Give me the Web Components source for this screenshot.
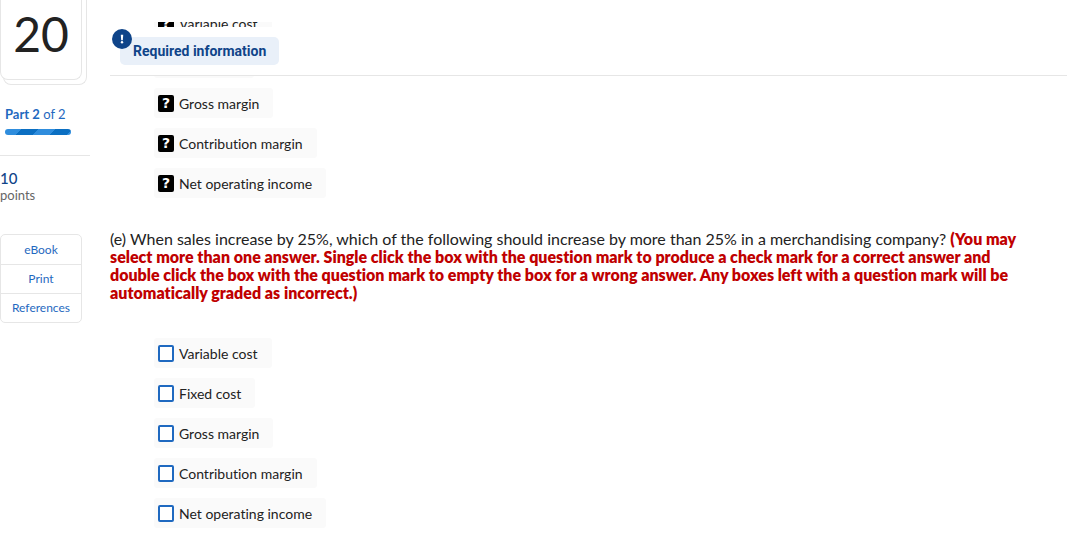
<!DOCTYPE html>
<html lang="en">
<head>
<meta charset="utf-8">
<meta name="viewport" content="width=device-width, initial-scale=1">
<title>Question 20</title>
<style>
  body {
    margin: 0;
    background: #fff;
    color: #222;
    font-family: Lato, "Open Sans", sans-serif;
    font-variant-ligatures: none;
  }
</style>
</head>
<body>
<question-page></question-page>

<script>
class QuestionNumber extends HTMLElement {
  constructor () {
    super()
    this.attachShadow({ mode: 'open' })
  }

  connectedCallback () {
    this.shadowRoot.innerHTML = `
    <style>
    :host {
      display: block;
      box-sizing: border-box;
      width: 87px;
      height: 85px;
      padding-right: 5px;
      padding-bottom: 5px;
      position: relative;
    }
    .back, .card {
      box-sizing: border-box;
      border: 1px solid #e6e6e6;
      border-top: 0;
      border-radius: 0 0 8px 8px;
      background: #fff;
    }
    .back {
      position: absolute;
      inset: 0 0 0 3px;
    }
    .card {
      position: relative;
      height: 80px;
      padding-top: 4px;
      text-align: center;
      font-size: 48px;
      line-height: 60px;
    }
    </style>
    <div class="back"></div>
    <div class="card"><slot></slot></div>
    `
  }
}
customElements.define('question-number', QuestionNumber)

class PartProgress extends HTMLElement {
  constructor () {
    super()
    this.attachShadow({ mode: 'open' })
  }

  connectedCallback () {
    this.shadowRoot.innerHTML = `
    <style>
    :host {
      display: block;
      padding: 0 19px 20px 5px;
      border-bottom: 1px solid #e6e6e6;
      color: #1f69c0;
      font-size: 13px;
      line-height: 18px;
    }
    .bar {
      height: 6px;
      margin-top: 6px;
      border-radius: 3px;
      background: repeating-linear-gradient(135deg, #2f8ddd 0 12px, #0b6fc2 12px 24px);
    }
    </style>
    <div><slot></slot></div>
    <div class="bar"></div>
    `
  }
}
customElements.define('part-progress', PartProgress)

class ResourceLinks extends HTMLElement {
  constructor () {
    super()
    this.attachShadow({ mode: 'open' })
  }

  connectedCallback () {
    this.shadowRoot.innerHTML = `
    <style>
    :host {
      display: flex;
      flex-direction: column;
      box-sizing: border-box;
      width: 82px;
      padding-top: 1px;
      border: 1px solid #e6e6e6;
      border-radius: 5px;
    }
    ::slotted(a) {
      color: #1f69c0;
      font-size: 12px;
      line-height: 28px;
      text-align: center;
      text-decoration: none;
    }
    ::slotted(a:not(:last-child)) {
      border-bottom: 1px solid #e6e6e6;
    }
    </style>
    <slot></slot>
    `
  }
}
customElements.define('resource-links', ResourceLinks)

class RequiredInfo extends HTMLElement {
  constructor () {
    super()
    this.attachShadow({ mode: 'open' })
  }

  connectedCallback () {
    this.shadowRoot.innerHTML = `
    <style>
    :host {
      display: block;
      position: absolute;
      top: 0;
      left: 0;
      right: 0;
    }
    .cover {
      height: 22px;
      background: #fff;
    }
    .header {
      box-sizing: border-box;
      height: 49px;
      margin-top: 5px;
      padding: 10px 10px;
      border-bottom: 1px solid #e6e6e6;
      background: #fff;
    }
    .label {
      display: inline-block;
      position: relative;
      padding: 0 13px;
      border-radius: 5px;
      background: #e9f0f9;
      color: #0f4489;
      font: 700 14px/28px Roboto, sans-serif;
    }
    .badge {
      position: absolute;
      top: -8px;
      left: -8px;
      width: 20px;
      height: 20px;
    }
    </style>
    <div class="cover"></div>
    <div class="header">
      <div class="label">
        <svg class="badge" viewBox="0 0 20 20" aria-hidden="true">
          <circle cx="10" cy="10" r="10" fill="#0f4489"/>
          <path d="M8.8 5.8h2.4l-.4 5.4H9.2z" fill="#fff"/>
          <circle cx="10" cy="13.2" r="1.2" fill="#fff"/>
        </svg>
        <slot></slot>
      </div>
    </div>
    `
  }
}
customElements.define('required-info', RequiredInfo)

class AnswerOption extends HTMLElement {
  constructor () {
    super()
    this.attachShadow({ mode: 'open' })
  }

  connectedCallback () {
    this.shadowRoot.innerHTML = `
    <style>
    :host {
      display: block;
    }
    label {
      display: flex;
      align-items: center;
      gap: 5px;
      box-sizing: border-box;
      min-width: 100px;
      height: 30px;
      padding: 0 14px 0 4px;
      border-radius: 3px;
      background: #fafafa;
      font-size: 14px;
      line-height: 20px;
    }
    span {
      padding-top: 2px;
    }
    input {
      appearance: none;
      flex: none;
      box-sizing: border-box;
      width: 16px;
      height: 17px;
      margin: 0;
      border: 2px solid #1f69c0;
      border-radius: 2px;
      background: #fff;
    }
    :host([marked]) input {
      border-color: #000;
      background: #000;
      color: #fff;
    }
    :host([marked]) input::before {
      content: "?";
      display: block;
      text-align: center;
      font: 700 14px/13px "DejaVu Sans", sans-serif;
    }
    </style>
    <label><input type="checkbox"><span><slot></slot></span></label>
    `
  }
}
customElements.define('answer-option', AnswerOption)

class AnswerList extends HTMLElement {
  constructor () {
    super()
    this.attachShadow({ mode: 'open' })
  }

  connectedCallback () {
    this.shadowRoot.innerHTML = `
    <style>
    :host {
      display: flex;
      flex-direction: column;
      align-items: flex-start;
      gap: 10px;
      padding-left: 44px;
    }
    </style>
    <slot></slot>
    `
  }
}
customElements.define('answer-list', AnswerList)

class QuestionPage extends HTMLElement {
  constructor () {
    super()
    this.attachShadow({ mode: 'open' })
  }

  connectedCallback () {
    this.shadowRoot.innerHTML = `
    <style>
    :host {
      display: grid;
      grid-template-columns: 90px 1fr;
      gap: 20px;
    }
    part-progress {
      margin-top: 20px;
    }
    .points {
      margin: 14px 0 31px;
      color: #666;
      font-size: 13px;
      line-height: 16px;
    }
    .points b {
      display: block;
      color: #0f4489;
      font-size: 15px;
      font-weight: 500;
      line-height: 17px;
    }
    main {
      position: relative;
      padding-top: 8px;
    }
    .question {
      margin: 32px 40px 36px 0;
      font-size: 16px;
      line-height: 18px;
    }
    .question strong {
      color: #c00000;
      font-weight: 800;
    }
    </style>
    <aside>
      <question-number>20</question-number>
      <part-progress><b>Part 2</b> of 2</part-progress>
      <div class="points"><b>10</b>points</div>
      <resource-links>
        <a href="#ebook">eBook</a>
        <a href="#print">Print</a>
        <a href="#references">References</a>
      </resource-links>
    </aside>
    <main>
      <answer-list>
        <answer-option marked>Variable cost</answer-option>
        <answer-option marked></answer-option>
        <answer-option marked>Gross margin</answer-option>
        <answer-option marked>Contribution margin</answer-option>
        <answer-option marked>Net operating income</answer-option>
      </answer-list>
      <p class="question">(e) When sales increase by 25%, which of the following should increase by more than 25% in a merchandising company? <strong>(You may<br>
        select more than one answer. Single click the box with the question mark to produce a check mark for a correct answer and<br>
        double click the box with the question mark to empty the box for a wrong answer. Any boxes left with a question mark will be<br>
        automatically graded as incorrect.)</strong></p>
      <answer-list>
        <answer-option>Variable cost</answer-option>
        <answer-option>Fixed cost</answer-option>
        <answer-option>Gross margin</answer-option>
        <answer-option>Contribution margin</answer-option>
        <answer-option>Net operating income</answer-option>
      </answer-list>
      <required-info>Required information</required-info>
    </main>
    `
  }
}
customElements.define('question-page', QuestionPage)
</script>
</body>
</html>
